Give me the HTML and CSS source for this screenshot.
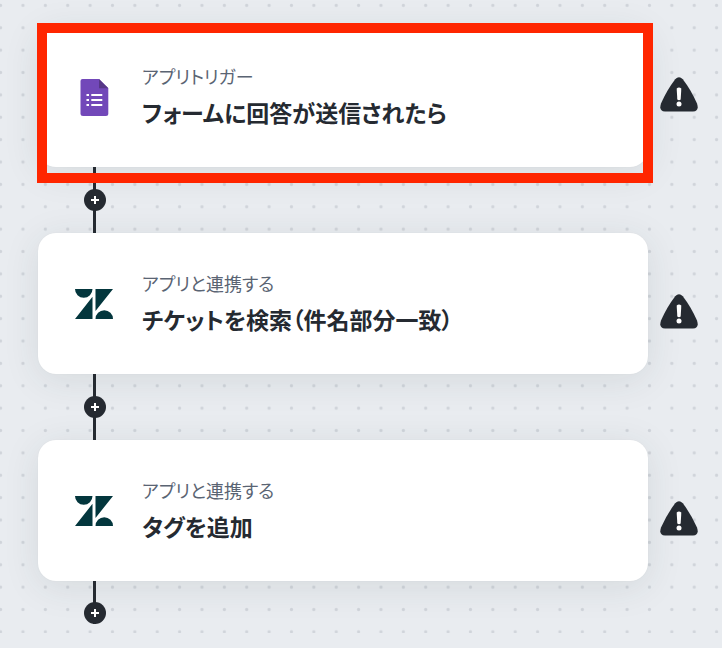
FILE: index.html
```html
<!DOCTYPE html>
<html lang="ja">
<head>
<meta charset="utf-8">
<meta name="viewport" content="width=device-width, initial-scale=1">
<title>フロー</title>
<link rel="stylesheet" href="styles.css">
</head>
<body>
<svg class="dots" aria-hidden="true">
  <defs>
    <pattern id="dot" x="-10.6" y="-5.8" width="22.375" height="22.375" patternUnits="userSpaceOnUse">
      <circle cx="11.2" cy="11.2" r="1.6" fill="#d0d4da"/>
    </pattern>
    <symbol id="zendesk" viewBox="0 0 38 30">
      <path d="M0 0H17.500A8.750 8.800 0 0 1 0 0ZM17.500 7.800V30H0ZM20.500 0H38L20.500 22ZM20.500 30A8.750 8.800 0 0 1 38 30Z" fill="#03363d"/>
    </symbol>
    <symbol id="warning" viewBox="0 0 38 35">
      <path d="M15.200 2.300Q19-2 22.800 2.300Q31 13 37 26.500Q39.500 34 33 34.500H5Q-1.500 34 1 26.500Q7 13 15.200 2.300Z" fill="#252a31"/>
      <path d="M16.700 11.500Q19 9.500 21.300 11.500L20.700 22.500Q19 24 17.300 22.500Z" fill="#fff"/>
      <circle cx="19" cy="27" r="2.500" fill="#fff"/>
    </symbol>
    <symbol id="plus" viewBox="0 0 10 10">
      <path d="M5 1V9M1 5H9" stroke="#fff" stroke-width="2"/>
    </symbol>
  </defs>
  <rect width="100%" height="633" fill="url(#dot)"/>
</svg>
<main class="flow">
  <section class="step step-trigger">
    <article class="card">
      <svg class="app-icon" viewBox="0 0 38 38" aria-hidden="true">
        <path d="M7.500 1H24L33.300 10.200V36Q33.300 38 31 38H8Q5.500 38 5.500 36V3Q5.500 1 7.500 1Z" fill="#7248b9"/>
        <path d="M24 1L33.300 10.200H24Z" fill="#563787"/>
        <path d="M11.500 17H14M16.300 17H27.300M11.500 22H14M16.300 22H27.300M11.500 27H14M16.300 27H27.300" stroke="#fff" stroke-width="2.200"/>
      </svg>
      <div class="text">
        <p class="kind">アプリトリガー</p>
        <h2 class="title">フォームに回答が送信されたら</h2>
      </div>
    </article>
    <svg class="warning" role="img" aria-label="警告"><use href="#warning"/></svg>
    <div class="highlight"></div>
  </section>
  <div class="connector"><button class="add" type="button" aria-label="追加"><svg><use href="#plus"/></svg></button></div>
  <section class="step">
    <article class="card">
      <svg class="app-icon app-icon-zendesk" aria-hidden="true"><use href="#zendesk"/></svg>
      <div class="text">
        <p class="kind">アプリと連携する</p>
        <h2 class="title">チケットを検索（件名部分一致）</h2>
      </div>
    </article>
    <svg class="warning" role="img" aria-label="警告"><use href="#warning"/></svg>
  </section>
  <div class="connector"><button class="add" type="button" aria-label="追加"><svg><use href="#plus"/></svg></button></div>
  <section class="step">
    <article class="card">
      <svg class="app-icon app-icon-zendesk" aria-hidden="true"><use href="#zendesk"/></svg>
      <div class="text">
        <p class="kind">アプリと連携する</p>
        <h2 class="title">タグを追加</h2>
      </div>
    </article>
    <svg class="warning" role="img" aria-label="警告"><use href="#warning"/></svg>
  </section>
  <div class="connector connector-end"><button class="add" type="button" aria-label="追加"><svg><use href="#plus"/></svg></button></div>
</main>
</body>
</html>
```
FILE: styles.css
```css
* { box-sizing: border-box; }

body {
  margin: 0;
  background: #e9ecf0;
  color: #252a31;
  font-family: "Noto Sans CJK JP", sans-serif;
  font-feature-settings: "palt";
}

.dots {
  position: absolute;
  inset: 0;
  z-index: -1;
  width: 100%;
  height: 100%;
}

.flow { padding: 26px 24px 24px 38px; }

.step {
  position: relative;
  display: flex;
  align-items: flex-start;
  gap: 12px;
}

.card {
  flex: 1;
  display: flex;
  align-items: center;
  gap: 29px;
  padding: 37px;
  border-radius: 18px;
  background: #fff;
  box-shadow: 0 0 1px rgba(37, 60, 60, 0.1), 0 6px 36px rgba(37, 60, 60, 0.1);
}

.app-icon {
  flex: none;
  width: 38px;
  height: 38px;
}

.app-icon-zendesk { height: 30px; }

.text { min-width: 0; }

.kind,
.title { margin: 0; }

.kind {
  color: #5a6473;
  font-size: 18px;
  font-weight: 400;
  line-height: 27px;
}

.title {
  margin-top: 5px;
  font-size: 23px;
  font-weight: 700;
  line-height: 35px;
}

.warning {
  flex: none;
  width: 38px;
  height: 35px;
  margin-top: 61px;
}

.step-trigger .warning { margin-top: 51px; }

.highlight {
  position: absolute;
  z-index: 1;
  inset: -3px 45px -16px -1px;
  border: 10px solid #ff2600;
  pointer-events: none;
}

.connector {
  position: relative;
  display: grid;
  place-items: center;
  width: 22px;
  height: 66px;
  margin-left: 46px;
  background: linear-gradient(#252a31, #252a31) 9px 0 / 3px 100% no-repeat;
}

.connector-end {
  height: 43px;
  align-items: end;
}

.add {
  display: grid;
  place-items: center;
  width: 22px;
  height: 22px;
  padding: 0;
  border: 0;
  border-radius: 50%;
  background: #252a31;
}

.add svg {
  width: 10px;
  height: 10px;
}
```
